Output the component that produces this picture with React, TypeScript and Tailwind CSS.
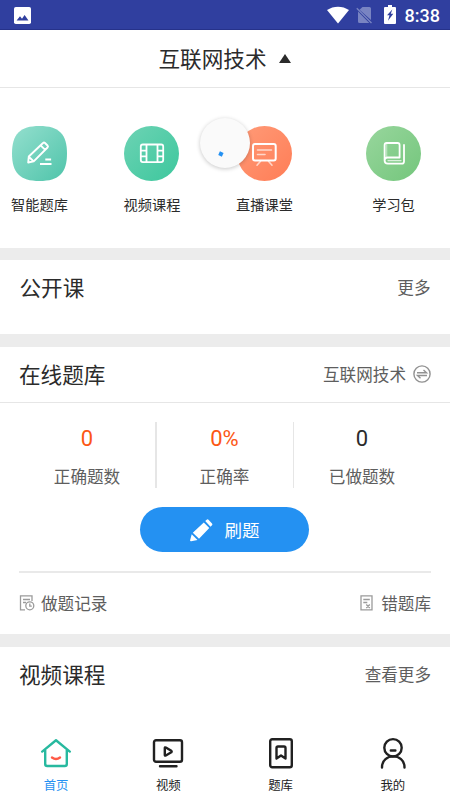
import type { ReactNode } from "react";

const white = { fill: "none", stroke: "white", strokeLinecap: "round", strokeLinejoin: "round" } as const;

function StatusBar() {
  return (
    <div className="flex h-[30px] shrink-0 items-center justify-between border-b border-[#26328a] bg-[#303f9f] pr-[10px] pl-[14px]">
      <svg width="17" height="17" viewBox="0 0 17 17" className="mt-px">
        <rect width="17" height="17" rx="1.8" fill="white" />
        <path d="M2.6 13.6 6 9.3l2 2.5L10.6 8l3.9 5.6z" fill="#303f9f" />
      </svg>
      <div className="flex items-center">
        <svg width="22" height="18" viewBox="0 0 22 18">
          <path d="M0 4C6.5-.5 15.5-.5 22 4L11 17.500z" fill="white" />
        </svg>
        <svg width="17" height="18" viewBox="0 0 17 18" className="ml-[7px]">
          <path d="M6.500 1h7q1.500 0 1.500 1.500v11.500L3.500 3.800zM2 5.500 13.300 17H3.500Q2 17 2 15.500z" fill="#7984c2" />
          <path d="M.8 2.200 15.500 17" stroke="#7984c2" strokeWidth="1.300" />
        </svg>
        <svg width="12" height="19" viewBox="0 0 12 19" className="ml-[11px]">
          <path d="M4 0h4v2h3q1 0 1 1v15q0 1-1 1H1q-1 0-1-1V3q0-1 1-1h3z" fill="white" />
          <path d="M8.300 4.500 3 10.300H5.500L4 15.800 9.300 8.700H6.800z" fill="#303f9f" />
        </svg>
        <span className="mt-[2px] ml-[9px] font-[Roboto] text-[18px] leading-none font-medium text-white">8:38</span>
      </div>
    </div>
  );
}

function PenIcon() {
  return (
    <svg width="55" height="55" viewBox="0 0 55 55">
      <defs>
        <linearGradient id="pen" x1="0" y1="0" x2="1" y2="1">
          <stop stopColor="#94dfce" />
          <stop offset="1" stopColor="#4fc4aa" />
        </linearGradient>
      </defs>
      <path d="M27.500 0C47 0 55 8 55 27.500S47 55 27.500 55 0 47 0 27.500 8 0 27.500 0z" fill="url(#pen)" />
      <g {...white} strokeWidth="1.900">
        <path d="M16.200 36.500l.6-6L31 17q1-1 2 0l2.500 2.500q1 1 0 2L21.700 35.400zM28.600 19.400l4.600 4.500M17 31l4.500 4.300" />
        <path d="M33.300 33.500h5.800M28 38h11.500" strokeLinecap="butt" />
      </g>
    </svg>
  );
}

function FilmIcon() {
  return (
    <svg width="55" height="55" viewBox="0 0 55 55">
      <defs>
        <linearGradient id="film" x1="0" y1="0" x2="1" y2="1">
          <stop stopColor="#6dd3b4" />
          <stop offset="1" stopColor="#3dc79d" />
        </linearGradient>
      </defs>
      <circle cx="27.500" cy="27.500" r="27.500" fill="url(#film)" />
      <g {...white} strokeWidth="1.800">
        <rect x="16.800" y="18.500" width="22.400" height="17.600" rx="2" />
        <path d="M22.500 19v17M33.500 19v17M17 24.700h5M17 30.300h5M34 24.700h5M34 30.300h5" />
      </g>
    </svg>
  );
}

function BoardIcon() {
  return (
    <svg width="55" height="55" viewBox="0 0 55 55">
      <defs>
        <linearGradient id="board" x1="0" y1="0" x2="1" y2="1">
          <stop stopColor="#ff9b78" />
          <stop offset="1" stopColor="#ff7d56" />
        </linearGradient>
      </defs>
      <circle cx="27.500" cy="27.500" r="27.500" fill="url(#board)" />
      <g {...white}>
        <rect x="16" y="18" width="22.700" height="16.500" rx="2" strokeWidth="2" />
        <path d="M20.500 24h14M20.500 28.500h7.500M23.500 35.300 20 39.200M31.500 35.300l3.500 3.900" strokeWidth="1.600" opacity=".65" />
      </g>
    </svg>
  );
}

function BookIcon() {
  return (
    <svg width="55" height="55" viewBox="0 0 55 55">
      <defs>
        <linearGradient id="book" x1="0" y1="0" x2="1" y2="1">
          <stop stopColor="#98d69d" />
          <stop offset="1" stopColor="#74c67c" />
        </linearGradient>
      </defs>
      <circle cx="27.500" cy="27.500" r="27.500" fill="url(#book)" />
      <g {...white} strokeWidth="1.800">
        <path d="M18.600 34.500V19q0-2 2-2h11q2 0 2 2v12.500H21.500q-2.900 0-2.900 3 0 3.100 3.200 3.100h14q2.200 0 2.200-2.200V19" />
        <path d="M20.600 17.500v13.500" opacity=".4" strokeWidth="1.400" />
        <path d="M22 34.600h13" strokeWidth="1.200" opacity=".7" />
      </g>
    </svg>
  );
}

function Shortcut({ label, children }: { label: string; children: ReactNode }) {
  return (
    <div className="flex flex-col items-center">
      {children}
      <span className="mt-[13px] text-[14.2px] leading-5 whitespace-nowrap text-[#2b2b2b]">{label}</span>
    </div>
  );
}

function Stat({ value, label, color }: { value: string; label: string; color: string }) {
  return (
    <div className="flex flex-1 flex-col items-center">
      <span className={`mt-px font-[Roboto] text-[22px] leading-[32px] ${color}`}>{value}</span>
      <span className="mt-[9px] text-[16.6px] leading-6 text-[#5e5e5e]">{label}</span>
    </div>
  );
}

function Tab({ label, active, children }: { label: string; active?: boolean; children: ReactNode }) {
  return (
    <div className="flex flex-1 flex-col items-center">
      <svg width="32" height="32" viewBox="0 0 32 32" fill="none" stroke="#212121" strokeWidth="2.400" strokeLinecap="round" strokeLinejoin="round">
        {children}
      </svg>
      <span className={`mt-[7px] text-[12.4px] leading-[18px] ${active ? "text-[#2491f2]" : "text-[#212121]"}`}>{label}</span>
    </div>
  );
}

export default function App() {
  return (
    <div className="flex h-[800px] w-[450px] flex-col overflow-hidden bg-white font-['Noto_Sans_CJK_SC',sans-serif] text-[#2b2b2b]">
      <StatusBar />
      <header className="flex h-[58px] shrink-0 items-center justify-center gap-[13px] border-b border-[#e6e6e6]">
        <h1 className="-mt-[2px] text-[21.6px] leading-8">互联网技术</h1>
        <svg width="12" height="9" viewBox="0 0 12 9">
          <path d="M6 0l6 9H0z" fill="#2b2b2b" />
        </svg>
      </header>

      <section className="relative flex h-[159.5px] shrink-0 pt-[38px]">
        <div className="flex w-[79px] shrink-0 justify-center"><Shortcut label="智能题库"><PenIcon /></Shortcut></div>
        <div className="flex w-[146px] shrink-0 justify-center"><Shortcut label="视频课程"><FilmIcon /></Shortcut></div>
        <div className="flex w-[79px] shrink-0 justify-center"><Shortcut label="直播课堂"><BoardIcon /></Shortcut></div>
        <div className="ml-[33px] flex flex-1 justify-center"><Shortcut label="学习包"><BookIcon /></Shortcut></div>
        {/* loading spinner */}
        <div className="absolute top-[30px] left-[200px] size-[50px] rounded-full bg-[#fafafa] shadow-[0_1px_4px_rgba(0,0,0,0.22)]">
          <div className="absolute top-[33.500px] left-[19px] h-[3.500px] w-[4px] rotate-[25deg] bg-[#2491f2]" />
        </div>
      </section>

      <div className="h-[12.5px] shrink-0 bg-[#ececec]" />
      <section className="flex h-[74px] shrink-0 items-start justify-between px-[19.5px] pt-[11px]">
        <h2 className="text-[21.6px] leading-8">公开课</h2>
        <span className="text-[16.6px] leading-8 text-[#5e5e5e]">更多</span>
      </section>
      <div className="h-[13px] shrink-0 bg-[#ececec]" />

      <section className="shrink-0">
        <div className="flex h-[56px] items-center justify-between border-b border-[#e6e6e6] px-[19px]">
          <h2 className="-mt-[2px] text-[21.6px] leading-8">在线题库</h2>
          <div className="flex items-center gap-[7px] text-[16.6px] leading-8 text-[#5e5e5e]">
            <span className="-mt-[2px]">互联网技术</span>
            <svg width="18" height="18" viewBox="0 0 18 18" fill="none" stroke="#929292" strokeWidth="1.400" className="-mt-[2px]">
              <circle cx="9" cy="9" r="8.100" />
              <path d="M4 7.700h9.500L10.500 5M14 10.500H4.500l3 2.700" />
            </svg>
          </div>
        </div>
        <div className="mt-[19px] flex h-[66px] pr-[20px] pl-[19px]">
          <Stat value="0" label="正确题数" color="text-[#fc5714]" />
          <div className="w-[1.5px] bg-[#e6e6e6]" />
          <Stat value="0%" label="正确率" color="text-[#fc5714]" />
          <div className="w-[1.5px] bg-[#e6e6e6]" />
          <Stat value="0" label="已做题数" color="text-[#2b2b2b]" />
        </div>
        <button className="mt-[19px] ml-[140px] flex h-[45px] w-[169px] items-center justify-center rounded-full bg-[#2491f2] pt-px text-[17.5px] text-white">
          <svg width="23" height="23" viewBox="0 0 23 23" fill="white" className="mr-[12px]">
            <path d="M15.200 2 17 .500q.700-.500 1.500.300L22 4.500q.700.700.200 1.500L20.500 7.800zM13.800 3.400l5.500 5.600L9 19.800 2.800 13.800zM1.700 15.300 7.500 21 1.200 22.300Q0 22.500.100 21.300z" />
          </svg>
          刷题
        </button>
        <div className="mx-[19px] mt-[19px] flex h-[63px] items-center justify-between border-t-2 border-[#e9e9e9] text-[16.6px] text-[#5e5e5e]">
          <div className="flex items-center gap-[6px]">
            <svg width="16" height="16" viewBox="0 0 16 16" fill="none" stroke="#9b9b9b" strokeWidth="1.300">
              <path d="M13 6V.8H1.500v14H6M4 4.500h7M4 7.500h3" />
              <circle cx="10.800" cy="10.800" r="4" />
              <path d="M10.800 8.500v2.600h2" />
            </svg>
            做题记录
          </div>
          <div className="flex items-center gap-[8px]">
            <svg width="13" height="16" viewBox="0 0 13 16" fill="none" stroke="#9b9b9b" strokeWidth="1.300">
              <path d="M1 .8h11v14H1zM3.300 4.500h6.500M3.300 7.500h4M6.300 9.500l3.500 3.500M9.800 9.500 6.300 13" />
            </svg>
            错题库
          </div>
        </div>
      </section>

      <section className="flex h-[103px] shrink-0 items-start justify-between border-t-[13px] border-[#ececec] px-[19px] pt-[11px]">
        <h2 className="text-[21.6px] leading-8">视频课程</h2>
        <span className="text-[16.6px] leading-8 text-[#5e5e5e]">查看更多</span>
      </section>

      <nav className="flex shrink-0 pr-px">
        <Tab label="首页" active>
          <path d="M2.200 14.600 16 3.200l13.800 11.400M5.200 13v14q0 2 2 2h17.600q2 0 2-2V13" stroke="#27b99f" />
          <path d="M12 20.500q4 3 8 0" stroke="#ff5a47" />
        </Tab>
        <Tab label="视频">
          <rect x="2" y="3.200" width="28" height="21.500" rx="2" />
          <path d="M12.800 11v7q0 1 1 .5l5.500-3.200q.8-.8 0-1.500l-5.500-3.300q-1-.5-1 .5zM8 29.300h16.500" />
        </Tab>
        <Tab label="题库">
          <rect x="5.200" y="2.200" width="21.600" height="28" rx="2" />
          <path d="M11.500 11q0-1.500 1.500-1.500h6q1.500 0 1.500 1.500v10.500L16 18.500l-4.500 3z" />
        </Tab>
        <Tab label="我的">
          <circle cx="16" cy="10.800" r="8.700" />
          <path d="M13.800 13.500h4.600M5 30.500C5 15.700 27.500 15.700 27.500 30.500" />
        </Tab>
      </nav>
    </div>
  );
}
